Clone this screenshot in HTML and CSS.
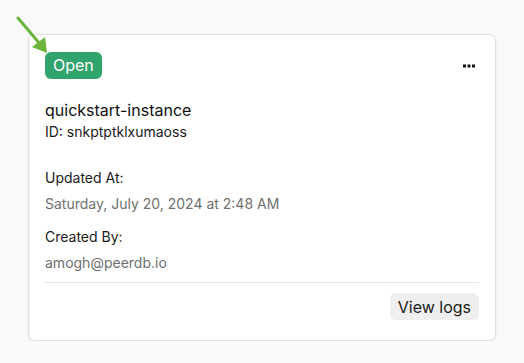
FILE: index.html
```html
<!DOCTYPE html>
<html lang="en">
<head>
    <meta charset="UTF-8">
    <meta name="viewport" content="width=device-width, initial-scale=1.0">
    <title>Instance</title>
    <link rel="stylesheet" href="styles.css">
</head>
<body>
    <svg class="pointer" width="40" height="42" viewBox="0 0 40 42">
        <line x1="3" y1="3" x2="25" y2="29" stroke="#6cb43c" stroke-width="3" stroke-linecap="round"/>
        <polygon points="17,32 32,38 30,22" fill="#6cb43c"/>
    </svg>
    <div class="card">
        <div class="card-top">
            <span class="badge">Open</span>
            <button class="more">
                <svg width="12" height="4" viewBox="0 0 12 4">
                    <rect x="0" y="0.5" width="3" height="3" fill="#111"/>
                    <rect x="4.5" y="0.5" width="3" height="3" fill="#111"/>
                    <rect x="9" y="0.5" width="3" height="3" fill="#111"/>
                </svg>
            </button>
        </div>
        <div class="name">quickstart-instance</div>
        <div class="instance-id">ID: snkptptklxumaoss</div>

        <div class="field first">
            <div class="label">Updated At:</div>
            <div class="value">Saturday, July 20, 2024 at 2:48 AM</div>
        </div>
        <div class="field">
            <div class="label">Created By:</div>
            <div class="value">amogh@peerdb.io</div>
        </div>

        <div class="card-footer">
            <button class="logs-btn">View logs</button>
        </div>
    </div>
</body>
</html>
```

FILE: styles.css
```css
body {
    margin: 0;
    padding: 34px 28px 0 28px;
    background-color: #f9f9f9;
    font-family: Inter, "Noto Sans", sans-serif;
    color: #1a1a1a;
    position: relative;
}

.pointer {
    position: absolute;
    left: 15px;
    top: 15px;
}

.card {
    width: 434px;
    background-color: #ffffff;
    border: 1px solid #dedede;
    border-radius: 7px;
    box-shadow: 0 1px 3px rgba(0, 0, 0, 0.08);
    padding: 17px 16px 20px 16px;
}

.card-top {
    display: flex;
    justify-content: space-between;
    align-items: center;
}

.badge {
    background-color: #30a46c;
    color: #ffffff;
    font-size: 16px;
    line-height: 27px;
    padding: 0 8px;
    border-radius: 6px;
}

.more {
    border: none;
    background: none;
    padding: 0;
    margin-right: 4px;
    display: flex;
}

.name {
    margin-top: 20px;
    font-size: 16px;
    line-height: 22px;
    color: #111111;
}

.instance-id {
    font-size: 14px;
    line-height: 22px;
}

.field {
    margin-top: 11px;
}

.field.first {
    margin-top: 24px;
}

.label {
    font-size: 14px;
    line-height: 22px;
}

.value {
    margin-top: 4px;
    font-size: 14px;
    line-height: 22px;
    color: #6f6f6f;
}

.card-footer {
    margin-top: 8px;
    padding-top: 10px;
    border-top: 1px solid #e4e4e4;
    display: flex;
    justify-content: flex-end;
}

.logs-btn {
    font-family: Inter, "Noto Sans", sans-serif;
    font-size: 16px;
    color: #1a1a1a;
    background-color: #efefef;
    border: none;
    border-radius: 6px;
    height: 27px;
    padding: 0 8px;
}
```
